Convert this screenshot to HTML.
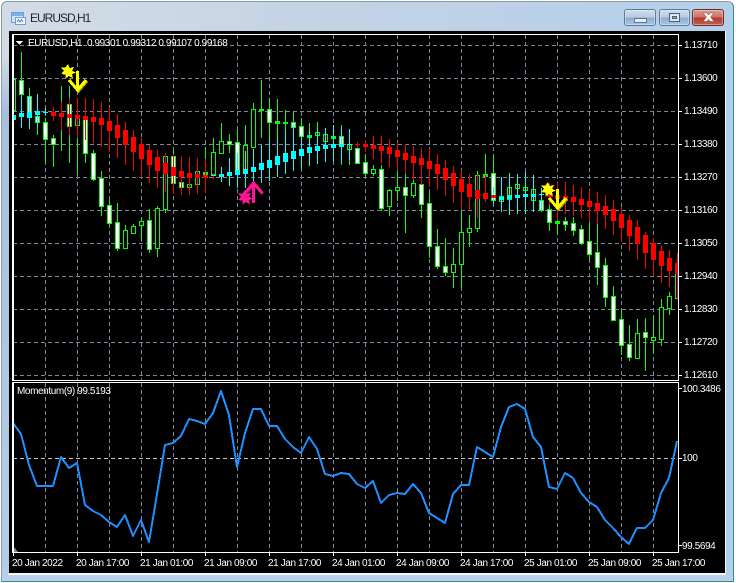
<!DOCTYPE html>
<html><head><meta charset="utf-8"><style>
html,body{margin:0;padding:0;background:#fff}
#w{position:relative;width:736px;height:583px;overflow:hidden;font-family:"Liberation Sans",sans-serif}
#f{position:absolute;left:1px;top:1px;width:733px;height:581px;box-sizing:border-box;border:1px solid #2f8ea3;border-top-color:#8a9bab;border-left-color:#8a9bab;border-radius:6px 6px 0 0;background:linear-gradient(90deg,#d3dce6 0,#c3d3e5 45%,#b4cfea 100%)}
#s{position:absolute;left:2px;top:60px;width:7px;height:521px;background:linear-gradient(180deg,#cbd8e6,#a9c0dd 10%,#b6cde8)}
#bt{position:absolute;left:2px;top:575px;width:731px;height:6px;background:#b9d2ea}
#c{position:absolute;left:9px;top:31px;width:716px;height:542px;background:#000}
#wl{position:absolute;left:8px;top:573px;width:718px;height:2px;background:#f4f7fa}
#wr{position:absolute;left:725px;top:31px;width:1px;height:544px;background:#f4f7fa}
.t{position:absolute;white-space:pre;font-size:10px;line-height:12px;color:#fff;letter-spacing:-.4px}
#ti{position:absolute;left:30px;top:11px;font-size:12px;line-height:14px;color:#1c2730;white-space:pre;letter-spacing:-1px}
.b{position:absolute;top:9px;height:17px;box-sizing:border-box;border:1px solid #5c7a98;border-radius:3px;background:linear-gradient(180deg,#cddcec 0,#b7cde3 48%,#8fadcb 52%,#a9c6e0 100%);box-shadow:inset 0 0 0 1px rgba(255,255,255,.35)}
svg{position:absolute;left:0;top:0}
</style></head><body><div id="w">
<div id="f"></div><div id="s"></div><div id="bt"></div><div id="c"></div><div id="wl"></div><div id="wr"></div>
<div class="b" style="left:624px;width:32px"></div>
<div class="b" style="left:659px;width:31px"></div>
<div class="b" style="left:692px;width:32px;border-color:#6b2a2a;background:linear-gradient(180deg,#dd9c90 0,#cc7265 48%,#b03a2c 52%,#c4604e 100%)"></div>
<div id="ti">EURUSD,H1</div>
<svg width="736" height="583" viewBox="0 0 736 583" shape-rendering="crispEdges">
<!-- title icon -->
<g shape-rendering="auto"><rect x="11.5" y="12.5" width="12" height="10" fill="#cfe2f6" stroke="#6f9fd6"/><rect x="15.5" y="17.5" width="10" height="7" fill="#f2f7fc" stroke="#6f9fd6"/><rect x="12" y="13" width="11" height="3" fill="#7fb0e6"/><path d="M17 22l1.500-2.500 1.500 2.500 1.500-2.500 1.500 2.500" fill="none" stroke="#4f7fb5" stroke-width=".9"/></g>
<!-- window button glyphs -->
<rect x="634.5" y="18.5" width="12" height="4" fill="#e8eef5" stroke="#5d7590"/>
<rect x="669.5" y="13.5" width="10" height="8" fill="#dde7f1" stroke="#4c6077"/><rect x="672.5" y="16.5" width="4" height="2" fill="#8aa6c2" stroke="#4c6077"/>
<path d="M703 13h4l1.500 2 1.500-2h4l-3.500 4 3.500 4.500h-4l-1.500-2-1.500 2h-4l3.500-4.500z" fill="#fbf8f7" stroke="#8a4a44" stroke-width=".5" shape-rendering="auto"/>
<!-- grid -->
<g stroke="#76889a" stroke-width="1" stroke-dasharray="4 3" fill="none">
<path d="M45.500 35V380M77.500 35V380M109.500 35V380M141.500 35V380M173.500 35V380M205.500 35V380M237.500 35V380M269.500 35V380M301.500 35V380M333.500 35V380M365.500 35V380M397.500 35V380M429.500 35V380M461.500 35V380M493.500 35V380M525.500 35V380M557.500 35V380M589.500 35V380M621.500 35V380M653.500 35V380"/>
<path d="M45.500 383V552M77.500 383V552M109.500 383V552M141.500 383V552M173.500 383V552M205.500 383V552M237.500 383V552M269.500 383V552M301.500 383V552M333.500 383V552M365.500 383V552M397.500 383V552M429.500 383V552M461.500 383V552M493.500 383V552M525.500 383V552M557.500 383V552M589.500 383V552M621.500 383V552M653.500 383V552"/>
<path d="M13 45.500H678M13 78.500H678M13 111.500H678M13 144.500H678M13 177.500H678M13 210.500H678M13 243.500H678M13 276.500H678M13 309.500H678M13 342.500H678M13 375.500H678"/>
</g>
<path d="M13 458.500H678" stroke="#c4c8cc" stroke-dasharray="4 3" fill="none"/>
<!-- green wicks -->
<path stroke="#0f0" fill="none" d="M13.500 59V110M21.500 52V95M29.500 88V117M37.500 110V135M45.500 118V163M53.500 135V167M61.500 86V151M69.500 86V163M77.500 100V175M85.500 98V163M93.500 150V181M101.500 171V216M109.500 200V226M117.500 203V251M125.500 225V248M133.500 224V233M141.500 218V240M149.500 209V253M157.500 206V257M165.500 153V213M173.500 150V190M181.500 175V190M189.500 181V190M197.500 168V190M205.500 148V174M213.500 138V174M221.500 123V153M229.500 134V153M237.500 130V170M245.500 125V170M253.500 103V147M261.500 80V138M269.500 98V160M277.500 99V140M285.500 110V140M293.500 112V130M301.500 118V137M309.500 123V140M317.500 122V140M325.500 128V145M333.500 125V140M341.500 125V165M349.500 135V165M357.500 145V164M365.500 155V177M373.500 165V176M381.500 165V211M389.500 189V216M397.500 171V201M405.500 174V233M413.500 177V198M421.500 180V218M429.500 193V258M437.500 229V269M445.500 238V276M453.500 248V288M461.500 210V288M469.500 215V247M477.500 171V232M485.500 154V176M493.500 155V200M501.500 190V205M509.500 180V200M517.500 180V190M525.500 180V190M533.500 185V200M541.500 195V212M549.500 205V231M557.500 214V235M565.500 217V231M573.500 217V236M581.500 225V245M589.500 220V260M597.500 224V285M605.500 258V307M613.500 286V321M621.500 310V355M629.500 325V361M637.500 319V359M645.500 318V371M653.500 316V354M661.500 299V346M669.500 292V315M677.500 285V298"/>
<!-- black-filled bodies -->
<path stroke="#0f0" fill="#000" d="M13.500 79.500h2V110.500h-2zM75.500 115.500h4V125.500h-4zM123.500 230.500h4V248.500h-4zM131.500 226.500h4V233.500h-4zM139.500 221.500h4V225.500h-4zM155.500 208.500h4V248.500h-4zM163.500 156.500h4V209.500h-4zM187.500 184.500h4V187.500h-4zM195.500 171.500h4V184.500h-4zM211.500 152.500h4V174.500h-4zM219.500 141.500h4V153.500h-4zM243.500 145.500h4V170.500h-4zM251.500 109.500h4V147.500h-4zM315.500 132.500h4V135.500h-4zM323.500 134.500h4V141.500h-4zM347.500 144.500h4V149.500h-4zM371.500 169.500h4V173.500h-4zM387.500 190.500h4V206.500h-4zM395.500 187.500h4V190.500h-4zM411.500 183.500h4V195.500h-4zM451.500 264.500h4V272.500h-4zM459.500 232.500h4V264.500h-4zM467.500 228.500h4V232.500h-4zM475.500 175.500h4V228.500h-4zM499.500 196.500h4V201.500h-4zM507.500 187.500h4V199.500h-4zM515.500 184.500h4V188.500h-4zM523.500 187.500h4V190.500h-4zM531.500 189.500h4V200.500h-4zM635.500 333.500h4V358.500h-4zM651.500 337.500h4V340.500h-4zM659.500 307.500h4V339.500h-4zM667.500 296.500h4V308.500h-4zM675.500 273.500h2V298.500h-2z"/>
<!-- white-filled bodies -->
<path stroke="#0f0" fill="#fff" d="M19.500 80.500h4V94.500h-4zM27.500 96.500h4V117.500h-4zM35.500 116.500h4V122.500h-4zM43.500 122.500h4V139.500h-4zM51.500 138.500h4V144.500h-4zM67.500 104.500h4V126.500h-4zM83.500 116.500h4V153.500h-4zM91.500 153.500h4V179.500h-4zM99.500 178.500h4V206.500h-4zM107.500 205.500h4V223.500h-4zM115.500 222.500h4V248.500h-4zM147.500 220.500h4V249.500h-4zM171.500 156.500h4V183.500h-4zM179.500 182.500h4V187.500h-4zM227.500 141.500h4V144.500h-4zM235.500 142.500h4V170.500h-4zM267.500 109.500h4V122.500h-4zM291.500 122.500h4V127.500h-4zM299.500 126.500h4V136.500h-4zM339.500 136.500h4V144.500h-4zM355.500 148.500h4V163.500h-4zM363.500 162.500h4V173.500h-4zM379.500 169.500h4V208.500h-4zM403.500 187.500h4V195.500h-4zM419.500 184.500h4V204.500h-4zM427.500 203.500h4V246.500h-4zM435.500 246.500h4V266.500h-4zM443.500 266.500h4V272.500h-4zM491.500 173.500h4V200.500h-4zM539.500 200.500h4V210.500h-4zM547.500 209.500h4V222.500h-4zM563.500 221.500h4V224.500h-4zM571.500 223.500h4V230.500h-4zM579.500 229.500h4V243.500h-4zM587.500 241.500h4V254.500h-4zM595.500 252.500h4V267.500h-4zM603.500 265.500h4V297.500h-4zM611.500 296.500h4V320.500h-4zM619.500 319.500h4V345.500h-4zM627.500 344.500h4V357.500h-4zM643.500 332.500h4V337.500h-4z"/>
<!-- green dash bodies -->
<path fill="#0f0" d="M203 172h5v3h-5zM259 109h5v2h-5zM275 121h5v3h-5zM283 122h5v2h-5zM307 135h5v3h-5zM331 136h5v3h-5zM483 174h5v3h-5zM555 221h5v3h-5z"/>
<!-- red wicks -->
<path stroke="#f00" fill="none" d="M53.500 107V121M61.500 102V130M69.500 98V135M77.500 98V138M85.500 98V140M93.500 99V143M101.500 102V147M109.500 107V152M117.500 114V158M125.500 122V165M133.500 130V171M141.500 138V178M149.500 145V183M157.500 150V188M165.500 153V192M173.500 154V194M181.500 156V195M189.500 157V195M197.500 158V194M205.500 159V193M213.500 173V179M357.500 142V148M365.500 140V152M373.500 136V159M381.500 136V164M389.500 139V167M397.500 142V170M405.500 144V174M413.500 146V180M421.500 148V185M429.500 148V187M437.500 154V190M445.500 160V196M453.500 166V203M461.500 170V210M469.500 174V210M477.500 175V218M485.500 175V202M549.500 183V205M557.500 183V220M565.500 182V214M573.500 185V216M581.500 187V218M589.500 190V222M597.500 192V224M605.500 195V229M613.500 200V235M621.500 207V242M629.500 215V251M637.500 220V260M645.500 232V269M653.500 238V276M661.500 245V283M669.500 250V287M677.500 253V300"/>
<!-- cyan wicks -->
<path stroke="#0ff" fill="none" d="M13.500 100V130M21.500 95V128M29.500 95V129M37.500 94V128M45.500 108V115M221.500 167V182M229.500 158V186M237.500 153V188M245.500 151V188M253.500 149V185M261.500 145V183M269.500 137V181M277.500 137V177M285.500 130V174M293.500 125V171M301.500 135V169M309.500 130V166M317.500 128V164M325.500 128V162M333.500 125V162M341.500 128V163M349.500 129V160M493.500 187V205M501.500 177V212M509.500 173V215M517.500 174V214M525.500 172V214M533.500 175V212M541.500 188V210"/>
<!-- red bodies -->
<path fill="#f00" d="M51 112h5v4h-5zM59 113h5v4h-5zM67 114h5v4h-5zM75 115h5v4h-5zM83 116h5v4h-5zM91 117h5v5h-5zM99 118h5v7h-5zM107 121h5v10h-5zM115 125h5v13h-5zM123 130h5v15h-5zM131 137h5v15h-5zM139 144h5v15h-5zM147 150h5v15h-5zM155 157h5v14h-5zM163 163h5v11h-5zM171 167h5v9h-5zM179 171h5v6h-5zM187 173h5v5h-5zM195 174h5v4h-5zM203 175h5v3h-5zM355 144h5v1h-5zM363 144h5v3h-5zM371 145h5v4h-5zM379 146h5v5h-5zM387 147h5v7h-5zM395 150h5v7h-5zM403 153h5v7h-5zM411 156h5v7h-5zM419 158h5v7h-5zM427 161h5v8h-5zM435 164h5v10h-5zM443 168h5v12h-5zM451 173h5v13h-5zM459 179h5v13h-5zM467 184h5v13h-5zM475 190h5v9h-5zM483 193h5v6h-5zM491 195h5v3h-5zM547 194h5v3h-5zM555 195h5v4h-5zM563 196h5v5h-5zM571 197h5v5h-5zM579 199h5v6h-5zM587 201h5v6h-5zM595 203h5v8h-5zM603 206h5v9h-5zM611 209h5v12h-5zM619 214h5v14h-5zM627 220h5v16h-5zM635 227h5v17h-5zM643 235h5v18h-5zM651 243h5v17h-5zM659 251h5v15h-5zM667 258h5v13h-5zM675 263h3v11h-3z"/>
<!-- cyan bodies -->
<path fill="#0ff" d="M13 115h3v5h-3zM19 113h5v4h-5zM27 112h5v6h-5zM35 111h5v4h-5zM43 112h5v1h-5zM211 175h5v1h-5zM219 174h5v3h-5zM227 172h5v4h-5zM235 170h5v5h-5zM243 169h5v5h-5zM251 167h5v5h-5zM259 163h5v7h-5zM267 160h5v8h-5zM275 156h5v9h-5zM283 153h5v9h-5zM291 151h5v8h-5zM299 149h5v7h-5zM307 147h5v6h-5zM315 146h5v5h-5zM323 145h5v4h-5zM331 144h5v4h-5zM339 144h5v3h-5zM347 144h5v1h-5zM499 197h5v3h-5zM507 195h5v4h-5zM515 195h5v3h-5zM523 194h5v3h-5zM531 194h5v3h-5zM539 194h5v1h-5z"/>
<!-- signals -->
<g fill="none">
<path d="M246 194l8.500-10 8.500 10" stroke="#8c1060" stroke-width="3"/>
<path d="M253.500 203V184M245 193l8.500-10 8.500 10" stroke="#ff1493" stroke-width="3"/>
<path d="M70 81l8.500 10 8.500-10M550 199l8.500 10 8.500-10" stroke="#b8a000" stroke-width="3"/>
<g stroke="#ff0" stroke-width="3"><path d="M77.500 71V90M69 80l8.500 10 8.500-10"/><path d="M557.500 189V208M549 198l8.500 10 8.500-10"/></g>
</g>
<g>
<path fill="#ff0" d="M68 64l1.800 4.200 4.200-1.400-1.800 4 4 2-4.200 1.200 1 4.400-4.300-2.400-3.400 3 .2-4.500-4.500-.4 3-3.200-3-3.400 4.500-.2z"/>
<path fill="#ff0" d="M548 182l1.800 4.200 4.200-1.400-1.800 4 4 2-4.200 1.200 1 4.400-4.300-2.400-3.400 3 .2-4.500-4.500-.4 3-3.200-3-3.400 4.500-.2z"/>
<path fill="#ff1493" d="M245 190l1.800 4.200 4.200-1.400-1.800 4 4 2-4.200 1.200 1 4.400-4.300-2.400-3.400 3 .2-4.500-4.500-.4 3-3.200-3-3.400 4.500-.2z"/>
</g>
<!-- momentum -->
<polyline fill="none" stroke="#1e90ff" stroke-width="2" stroke-linejoin="round" points="13,423 21,434 29,465 37,486 45,486 53,486 61,457 69,468 77,463 85,505 93,511 101,515 109,522 117,527 125,515 133,536 141,520 149,542 157,494 165,445 173,443 181,436 189,419 197,421 205,424 213,413 221,391 229,415 237,467 245,433 253,409 261,409 269,426 277,426 285,439 293,447 301,453 309,437 317,449 325,474 333,476 341,473 349,474 357,484 365,488 373,481 381,503 389,495 397,493 405,494 413,484 421,493 429,513 437,518 445,523 453,494 461,485 469,485 477,447 485,452 493,457 501,427 509,407 517,404 525,409 533,437 541,447 549,487 557,489 565,473 573,478 581,493 589,502 597,507 605,520 613,528 621,537 629,544 637,528 645,528 653,520 661,493 669,478 677,441"/>
<!-- frames -->
<path fill="none" stroke="#fff" d="M12.500 34.500H678.500V380.500H12.500ZM12.500 382.500H678.500V552.500H12.500Z"/>
<path fill="#fff" d="M13 34h1v346h-1zM13 382h1v170h-1z"/>
<path stroke="#fff" fill="none" d="M679 45.500h3M679 78.500h3M679 111.500h3M679 144.500h3M679 177.500h3M679 210.500h3M679 243.500h3M679 276.500h3M679 309.500h3M679 342.500h3M679 375.500h3M679 388.500h3M679 458.500h3M679 545.500h3M13.500 553v3M77.500 553v3M141.500 553v3M205.500 553v3M269.500 553v3M333.500 553v3M397.500 553v3M461.500 553v3M525.500 553v3M589.500 553v3M653.500 553v3"/>
<polygon fill="#7c8a96" points="14,547 18,552 14,552"/>
<polygon fill="#fff" points="16,41 23,41 19.500,45"/>
</svg>
<div class="t" style="left:28px;top:38px">EURUSD,H1  0.99301 0.99312 0.99107 0.99168</div>
<div class="t" style="left:17px;top:386px">Momentum(9) 99.5193</div>
<div class="t" style="left:684px;top:40px">1.13710</div>
<div class="t" style="left:684px;top:73px">1.13600</div>
<div class="t" style="left:684px;top:106px">1.13490</div>
<div class="t" style="left:684px;top:139px">1.13380</div>
<div class="t" style="left:684px;top:172px">1.13270</div>
<div class="t" style="left:684px;top:205px">1.13160</div>
<div class="t" style="left:684px;top:238px">1.13050</div>
<div class="t" style="left:684px;top:271px">1.12940</div>
<div class="t" style="left:684px;top:304px">1.12830</div>
<div class="t" style="left:684px;top:337px">1.12720</div>
<div class="t" style="left:684px;top:370px">1.12610</div>
<div class="t" style="left:682px;top:384px">100.3486</div>
<div class="t" style="left:682px;top:453px">100</div>
<div class="t" style="left:682px;top:541px">99.5694</div>
<div class="t" style="left:12px;top:558px">20 Jan 2022</div>
<div class="t" style="left:76px;top:558px">20 Jan 17:00</div>
<div class="t" style="left:140px;top:558px">21 Jan 01:00</div>
<div class="t" style="left:204px;top:558px">21 Jan 09:00</div>
<div class="t" style="left:268px;top:558px">21 Jan 17:00</div>
<div class="t" style="left:332px;top:558px">24 Jan 01:00</div>
<div class="t" style="left:396px;top:558px">24 Jan 09:00</div>
<div class="t" style="left:460px;top:558px">24 Jan 17:00</div>
<div class="t" style="left:524px;top:558px">25 Jan 01:00</div>
<div class="t" style="left:588px;top:558px">25 Jan 09:00</div>
<div class="t" style="left:652px;top:558px">25 Jan 17:00</div>
</div></body></html>
